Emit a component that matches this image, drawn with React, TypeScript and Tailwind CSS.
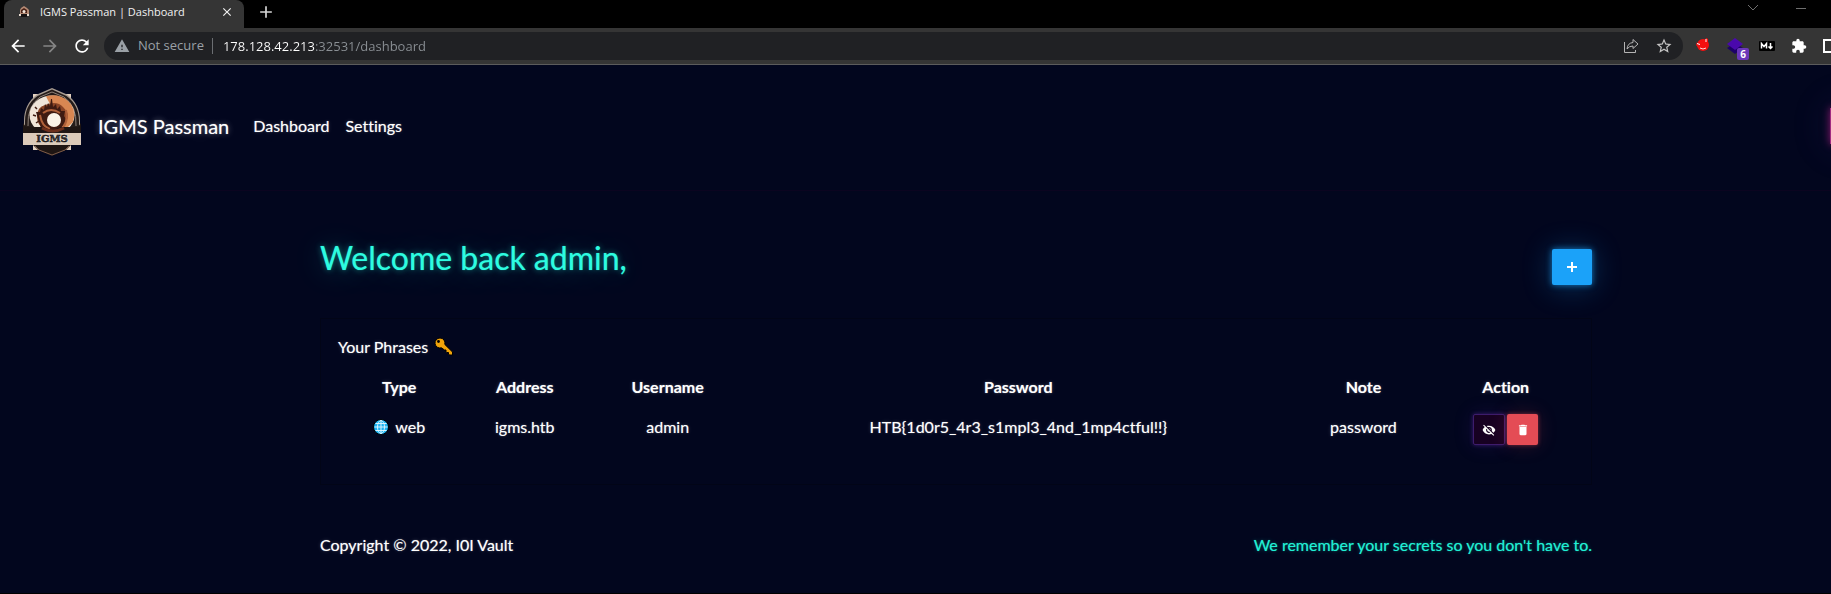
import React from "react";
import { MdAdd, MdArrowBack, MdArrowForward, MdClose, MdDelete, MdExtension, MdRefresh, MdStarBorder, MdVisibilityOff, MdWarning } from "react-icons/md";

interface Phrase {
  type: string;
  address: string;
  username: string;
  password: string;
  note: string;
}

const phrases: Phrase[] = [
  {
    type: "web",
    address: "igms.htb",
    username: "admin",
    password: "HTB{1d0r5_4r3_s1mpl3_4nd_1mp4ctful!!}",
    note: "password",
  },
];

const IgmsLogo: React.FC<{ className?: string }> = ({ className }) => (
  <svg className={className} viewBox="0 0 58 68" aria-hidden="true">
    <path d="M10 6h38v56H10z" fill="#e3d0bf" />
    <path d="M29 0l15 6.500Q57 16 57 33v6H1v-6Q1 16 14 6.500z" fill="#a89c92" />
    <path d="M29 1.500l14.500 6.500Q56 17 56 33v6H2v-6Q2 17 14.500 8z" fill="#241b19" />
    <path d="M5 38Q4 18 17 9l12-5 12 5q13 9 12 29" fill="none" stroke="#8f8279" strokeWidth="1" />
    <ellipse cx="29" cy="27" rx="22.500" ry="19.500" fill="#f1e6da" />
    <path d="M23 8.200Q36 5 45 13q9 8 5 21l-8 8-8-12z" fill="#d98752" />
    <path d="M14 29q0-10 8-12 12-5 18 2 8 7 3 15l-6 8H22q-8-5-8-13z" fill="#8b4526" />
    <path
      d="M13 24l4 0 1-4 3 2 1-6 2 3 1-4 2 3 1-7h1l1 8 3-3 1 5 3-3 1 5h4l-1 5 2 3-3 6-4 6-5 3H23l-5-6-2-6z"
      fill="#3f1b12"
    />
    <path d="M17 27q2 12 10 14M43 22q3 14-6 20M20 25q8-6 17 0" fill="none" stroke="#b0613a" strokeWidth="2" />
    <path d="M12 19l2 2M10 27l3 1M13 35l3-2" stroke="#3f1b12" strokeWidth="1.500" />
    <circle cx="31" cy="32" r="7" fill="#fbf3e8" />
    <path d="M0 35l3 4h18q8 5 16 0h18l3-4v12H0z" fill="#1e1513" />
    <path d="M19 40q11 6 22 0" fill="none" stroke="#6b2f1c" strokeWidth="3" />
    <path d="M0 45h58v12H0z" fill="#dccab9" />
    <path d="M10 57h38l-5 5-14 6-14-6z" fill="#1e1513" />
    <path d="M12 58l4 4 13 5 13-5 4-4" fill="none" stroke="#7d5b49" strokeWidth="1" />
    <text
      x="29"
      y="54"
      textAnchor="middle"
      fontFamily="DejaVu Serif, serif"
      fontWeight="bold"
      fontSize="10"
      fill="#0b0808"
      stroke="#0b0808"
      strokeWidth="0.500"
    >
      IGMS
    </text>
  </svg>
);

const Favicon = () => (
  <svg className="size-4" viewBox="0 0 16 16" aria-hidden="true">
    <path d="M4 11V6l1-2 3-2 3 2 2 2v5z" fill="#b58a74" />
    <path d="M5 9V6l3-2 3 2v3z" fill="#4a2116" />
    <circle cx="8" cy="7.500" r="1.500" fill="#f4e8dc" />
    <path d="M3 10h3v2H3zM10 10h3v2h-3z" fill="#e8dcd2" />
    <path d="M5 10h6v3H5z" fill="#171313" />
  </svg>
);

const KeyIcon = () => (
  <svg className="size-5" viewBox="0 0 20 20" aria-hidden="true">
    <path
      d="M6 1a5 5 0 0 1 4.800 6.400l7.700 7.600v3h-3l-1-1v-1.500H13l-1-1v-1.500h-1.500L7.400 10.800A5 5 0 1 1 6 1z"
      fill="#f0a30a"
      stroke="#000"
      strokeWidth="1"
    />
    <circle cx="4.500" cy="4.500" r="1.400" fill="#000" />
  </svg>
);

const GlobeIcon = () => (
  <svg className="size-4" viewBox="0 0 16 16" aria-hidden="true">
    <circle cx="8" cy="8" r="7.500" fill="#1bb4f5" stroke="#000" />
    <g fill="none" stroke="#d8f4ff" strokeWidth="1">
      <path d="M8 1.500v13M1.500 8h13M2.500 4.500h11M2.500 11.500h11" />
      <ellipse cx="8" cy="8" rx="3.500" ry="6.500" />
    </g>
  </svg>
);

const TabStrip = () => (
  <div className="flex h-7 items-center bg-black">
    <div className="ml-1 flex h-7 w-60 items-center rounded-t-lg bg-[#353535] pr-2.5 pl-3 text-[#f1f1f1]">
      <span className="mb-1">
        <Favicon />
      </span>
      <span className="ml-2 flex-1 pb-1 text-[11px] leading-4 whitespace-nowrap">IGMS Passman | Dashboard</span>
      <button type="button" aria-label="Close tab" className="mb-1">
        <MdClose className="size-3.5" />
      </button>
    </div>
    <button type="button" aria-label="New tab" className="mb-1 ml-3 text-[#d5d5d5]">
      <MdAdd className="size-5" />
    </button>
    <div className="mr-6 mb-3 ml-auto flex items-center gap-9 text-[#6f6f6f]">
      <button type="button" aria-label="Search tabs">
        <svg className="h-2 w-3" viewBox="0 0 12 8" fill="none" stroke="currentColor">
          <path d="M1 1l5 5 5-5" />
        </svg>
      </button>
      <button type="button" aria-label="Minimize">
        <svg className="h-2 w-3" viewBox="0 0 12 8" fill="none" stroke="currentColor">
          <path d="M1 4.500h10" />
        </svg>
      </button>
    </div>
  </div>
);

const Toolbar = () => (
  <div className="flex h-[37px] items-center overflow-hidden border-b border-[#5c5c5c] bg-[#353535] pl-2 text-white">
    <div className="flex items-center gap-3">
      <button type="button" aria-label="Back">
        <MdArrowBack className="size-5" />
      </button>
      <button type="button" aria-label="Forward" className="text-[#858585]">
        <MdArrowForward className="size-5" />
      </button>
      <button type="button" aria-label="Reload">
        <MdRefresh className="size-5" />
      </button>
    </div>
    <div className="ml-3 flex h-7 flex-1 items-center rounded-full bg-[#202124] pr-2.5 pl-2.5 text-[13px] text-[#9aa0a6]">
      <MdWarning className="size-4" />
      <span className="ml-2 whitespace-nowrap">Not secure</span>
      <span className="mr-2.5 ml-2 h-4 w-px bg-[#6b6e72]" />
      <input
        type="text"
        aria-label="Address"
        defaultValue="178.128.42.213:32531/dashboard"
        className="h-7 min-w-0 flex-1 bg-linear-to-r from-white from-[92px] to-[#8b9095] to-[92px] bg-clip-text text-transparent outline-none"
      />
      <button type="button" aria-label="Share" className="mr-4 text-[#b4b4b4]">
        <svg className="size-4" viewBox="0 0 16 16" fill="none" stroke="currentColor">
          <path d="M1.500 4v10.500h11V12" />
          <path d="M10 1.500l5 4.500-5 4.500V8Q6 8 4 11q.5-6 6-6.500z" />
        </svg>
      </button>
      <button type="button" aria-label="Bookmark">
        <MdStarBorder className="size-[18px] text-[#c4c4c4]" />
      </button>
    </div>
    <div className="-mr-2 ml-3 flex items-center gap-4">
      <button type="button" aria-label="Red extension">
        <svg className="size-4" viewBox="0 0 16 16">
          <circle cx="8" cy="7" r="6" fill="#f50f0f" />
          <path d="M2 4L1 7l2 2M11 0l2 1v3l-3-1z" fill="#f50f0f" />
          <path d="M11 1v3M2 5.500l3 1" stroke="#fff" fill="none" />
          <path d="M5 10q3 2 6 0" stroke="#ffd6d6" fill="none" />
        </svg>
      </button>
      <button type="button" aria-label="Layer extension, 6" className="relative">
        <svg className="size-4" viewBox="0 0 16 16">
          <path d="M0 10l8-5 8 5-8 6z" fill="#1d0168" />
          <path d="M0 6l8-6 8 6-8 6z" fill="#4a08ad" />
        </svg>
        <span className="absolute top-2.5 left-2.5 h-3 w-3 rounded-xs bg-[#6b37b9] text-[10px] leading-3 font-bold">6</span>
      </button>
      <button type="button" aria-label="Markdown extension">
        <svg className="h-2.5 w-4" viewBox="0 0 16 10">
          <rect width="16" height="10" rx="1" fill="#000" />
          <path d="M2.500 7.500v-5l2.500 3 2.500-3v5M11.500 2v5M9.500 5.500l2 2 2-2" fill="none" stroke="#fff" strokeWidth="1.500" />
        </svg>
      </button>
      <button type="button" aria-label="Extensions">
        <MdExtension className="size-4" />
      </button>
      <button type="button" aria-label="Side panel">
        <svg className="h-3.5 w-4" viewBox="0 0 16 14" fill="none" stroke="#fff" strokeWidth="2">
          <path d="M1 1h14v12H1z" />
        </svg>
      </button>
    </div>
  </div>
);

const Navbar = () => (
  <nav className="flex items-center overflow-hidden border-b border-[#0b0420] pt-[23px] pb-[34px] pl-[23px]">
    <a href="#" aria-label="IGMS Passman">
      <IgmsLogo className="h-[68px] w-[58px]" />
    </a>
    <div className="flex flex-1 items-center pt-2">
      <a
        href="#"
        className="ml-[17px] text-[20px] leading-[30px] whitespace-nowrap [text-shadow:0_0_1px_rgba(255,255,255,0.5),0_0_6px_rgba(255,255,255,0.4),0_2px_20px_rgba(255,255,255,0.15)]"
      >
        IGMS Passman
      </a>
      <a href="#" className="ml-6">
        Dashboard
      </a>
      <a href="#" className="ml-4">
        Settings
      </a>
      <button
        type="button"
        aria-label="Logout"
        className="-mr-20 ml-auto h-9 w-[81px] bg-[#a02a80] shadow-[0_0_8px_rgba(190,30,140,0.7),0_0_40px_rgba(90,70,160,0.2)]"
      />
    </div>
  </nav>
);

const PhraseTable = () => (
  <table className="mt-2 w-full table-fixed text-center">
    <colgroup>
      <col className="w-[9.900%]" />
      <col className="w-[10.400%]" />
      <col className="w-[12.700%]" />
      <col className="w-[44%]" />
      <col className="w-[11.800%]" />
      <col className="w-[11.200%]" />
    </colgroup>
    <thead>
      <tr>
        <th className="p-2">Type</th>
        <th className="p-2">Address</th>
        <th className="p-2">Username</th>
        <th className="p-2">Password</th>
        <th className="p-2">Note</th>
        <th className="p-2">Action</th>
      </tr>
    </thead>
    <tbody>
      {phrases.map((phrase) => (
        <tr key={phrase.address} className="align-top">
          <td className="p-2">
            <span className="flex items-center justify-center gap-1.5">
              <GlobeIcon />
              {phrase.type}
            </span>
          </td>
          <td className="p-2">{phrase.address}</td>
          <td className="p-2">{phrase.username}</td>
          <td className="p-2">{phrase.password}</td>
          <td className="p-2">{phrase.note}</td>
          <td className="px-2 py-[7px]">
            <div className="flex justify-center gap-0.5">
              <button
                type="button"
                aria-label="Hide password"
                className="flex h-[31px] w-8 items-center justify-center rounded-xs border border-[#3d1c6c] bg-[#170122] shadow-[0_0_4px_rgba(90,40,160,0.6),0_0_20px_rgba(90,40,160,0.2)]"
              >
                <MdVisibilityOff className="size-3.5" />
              </button>
              <button
                type="button"
                aria-label="Delete phrase"
                className="flex h-[31px] w-[31px] items-center justify-center rounded-xs bg-[#e44c55] shadow-[0_0_4px_rgba(228,76,85,0.5),0_0_20px_rgba(228,76,85,0.2)]"
              >
                <MdDelete className="size-3.5" />
              </button>
            </div>
          </td>
        </tr>
      ))}
    </tbody>
  </table>
);

const Dashboard = () => (
  <main className="pr-[239px] pl-80">
    <div className="flex items-end justify-between pt-12">
      <h2 className="mb-2 text-[32px] leading-[38px] text-[#2dfce0] [text-shadow:0_0_1px_rgba(45,252,224,0.6),0_0_6px_rgba(45,252,224,0.45),0_2px_30px_rgba(45,252,224,0.3)]">
        Welcome back admin,
      </h2>
      <button
        type="button"
        aria-label="Add phrase"
        className="flex h-9 w-10 items-center justify-center rounded-xs bg-[#1ba2f9] shadow-[0_0_6px_rgba(27,162,249,0.7),0_2px_30px_rgba(27,162,249,0.3)]"
      >
        <svg className="size-4" viewBox="0 0 16 16" fill="none" stroke="currentColor" strokeWidth="2">
          <path d="M8 3v10M3 8h10" />
        </svg>
      </button>
    </div>
    <section className="mt-[33px] border border-[#020517] p-4 pb-8 pl-[17px]">
      <h3 className="flex items-center gap-1.5">
        Your Phrases <KeyIcon />
      </h3>
      <PhraseTable />
    </section>
    <footer className="mt-12 flex justify-between pb-9">
      <span>Copyright © 2022, I0I Vault</span>
      <span className="text-[#1ff0d4] [text-shadow:0_0_1px_rgba(45,252,224,0.5),0_0_4px_rgba(45,252,224,0.3)]">
        We remember your secrets so you don't have to.
      </span>
    </footer>
  </main>
);

export default function App() {
  return (
    <div className="w-full overflow-hidden bg-[#02061e]">
      <header className="font-['Open_Sans',sans-serif]">
        <TabStrip />
        <Toolbar />
      </header>
      <div className="border-b border-black font-['Lato',sans-serif] text-base text-white [font-variant-ligatures:none] [text-shadow:0_0_1px_rgba(255,255,255,0.5),0_0_4px_rgba(255,255,255,0.2)]">
        <Navbar />
        <Dashboard />
      </div>
    </div>
  );
}
